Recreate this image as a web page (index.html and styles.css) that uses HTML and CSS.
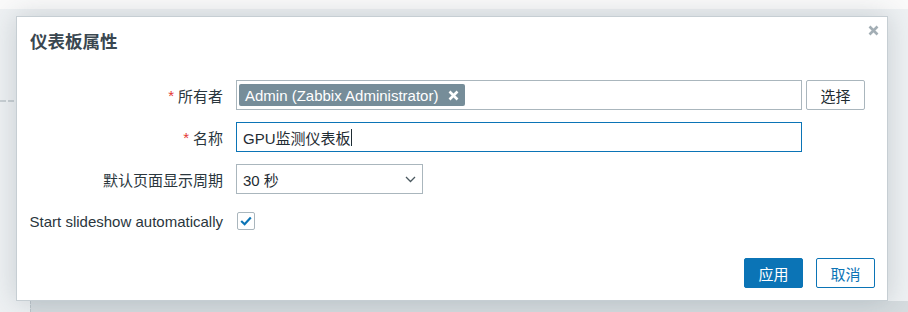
FILE: index.html
```html
<!DOCTYPE html>
<html lang="zh">
<head>
    <meta charset="UTF-8">
    <title>仪表板属性</title>
    <link rel="stylesheet" href="styles.css">
</head>
<body>
    <div class="page-header"></div>
    <div class="dashboard">
        <div class="grid-rule"></div>
        <div class="widget"></div>
    </div>

    <div class="dialog">
        <div class="dialog-head">
            <h4>仪表板属性</h4>
            <button class="btn-close" type="button" title="关闭">
                <svg width="11" height="11" viewBox="0 0 11 11"><path d="M1.5 1.5l8 8M9.5 1.5l-8 8" stroke="#a3aeb5" stroke-width="2.6" stroke-linecap="butt"/></svg>
            </button>
        </div>

        <form class="form-grid">
            <label class="field-label"><span class="req">*</span> 所有者</label>
            <div class="field owner">
                <div class="multiselect">
                    <span class="tag">Admin (Zabbix Administrator)
                        <svg class="tag-x" width="11" height="11" viewBox="0 0 11 11"><path d="M1.5 1.5l8 8M9.5 1.5l-8 8" stroke="#fff" stroke-width="2.6"/></svg>
                    </span>
                </div>
                <button class="btn-alt" type="button">选择</button>
            </div>

            <label class="field-label"><span class="req">*</span> 名称</label>
            <div class="field">
                <div class="text-input focused">GPU监测仪表板<span class="caret"></span></div>
            </div>

            <label class="field-label">默认页面显示周期</label>
            <div class="field">
                <div class="select">
                    <span>30 秒</span>
                    <svg width="11" height="7" viewBox="0 0 11 7"><path d="M1 1l4.5 4.5L10 1" fill="none" stroke="#4b5960" stroke-width="1.3"/></svg>
                </div>
            </div>

            <label class="field-label">Start slideshow automatically</label>
            <div class="field">
                <span class="checkbox">
                    <svg width="12" height="10" viewBox="0 0 12 10"><path d="M1.2 5l3.4 3.2L10.8 1.5" fill="none" stroke="#0b74b6" stroke-width="2.2"/></svg>
                </span>
            </div>
        </form>

        <div class="dialog-foot">
            <button class="btn-main" type="button">应用</button>
            <button class="btn-outline" type="button">取消</button>
        </div>
    </div>
</body>
</html>
```

FILE: styles.css
```css
/* page behind the dialog */
body {
    margin: 0;
    width: 908px;
    height: 312px;
    overflow: hidden;
    background-color: #f3f5f6;
    font-family: 'Liberation Sans', 'Noto Sans CJK SC', sans-serif;
    font-size: 15px;
    color: #1f2c33;
}

.page-header {
    height: 9px;
    background-color: #fafafa;
}

.dashboard {
    display: flex;
    flex-direction: column;
    height: 303px;
    background-color: #eef1f3;
}

.grid-rule {
    margin-top: 91px;
    width: 30px;
    border-top: 2px dashed #c9d0d4;
}

.widget {
    flex: 1;
    margin: 199px 0 0 30px;
    border-left: 1px dashed #bcc5ca;
    background-color: #d6dcdf;
}

/* dialog */
.dialog {
    position: absolute;
    left: 16px;
    top: 16px;
    width: 870px;
    height: 283px;
    border: 1px solid #c6ced3;
    background-color: #ffffff;
    box-shadow: 0 0 26px rgba(40, 60, 75, 0.2);
    display: flex;
    flex-direction: column;
}

.dialog-head {
    display: flex;
    justify-content: space-between;
    align-items: flex-start;
    padding: 15px 7px 0 13px;
}

.dialog-head h4 {
    margin: 0;
    font-size: 17.5px;
    line-height: 20px;
    font-weight: bold;
    color: #3a4750;
}

.btn-close {
    border: none;
    background: none;
    padding: 0;
    margin-top: -8px;
    width: 13px;
    height: 13px;
    cursor: pointer;
}

/* form */
.form-grid {
    display: grid;
    grid-template-columns: 193px 1fr;
    column-gap: 13px;
    row-gap: 12px;
    grid-auto-rows: 30px;
    margin: 0;
    padding: 28px 12px 0 13px;
}

.field-label {
    display: flex;
    align-items: center;
    justify-content: flex-end;
    white-space: nowrap;
    color: #2a363d;
}

.req {
    color: #e33734;
    margin-right: 4px;
}

.field {
    display: flex;
    align-items: center;
    gap: 4px;
}

.multiselect, .text-input, .select {
    box-sizing: border-box;
    height: 30px;
    border: 1px solid #aab6bd;
    background-color: #ffffff;
}

.multiselect {
    width: 566px;
    display: flex;
    align-items: center;
    padding-left: 2px;
}

.tag {
    display: inline-flex;
    align-items: center;
    gap: 10px;
    height: 22px;
    padding: 0 6px 0 6px;
    border-radius: 2px;
    background-color: #768d99;
    color: #ffffff;
    white-space: nowrap;
}

.btn-alt {
    box-sizing: border-box;
    width: 59px;
    height: 30px;
    border: 1px solid #aab6bd;
    border-radius: 2px;
    background-color: #ffffff;
    font-family: inherit;
    font-size: 15px;
    color: #1f2c33;
}

.text-input {
    width: 566px;
    display: flex;
    align-items: center;
    padding-left: 6px;
}

.text-input.focused {
    border-color: #0b74b6;
}

.caret {
    display: inline-block;
    width: 1px;
    height: 17px;
    background-color: #1f2c33;
}

.select {
    width: 187px;
    display: flex;
    align-items: center;
    justify-content: space-between;
    padding: 0 6px 0 6px;
}

.checkbox {
    box-sizing: border-box;
    width: 18px;
    height: 18px;
    margin-left: 1px;
    border: 1px solid #aab6bd;
    border-radius: 2px;
    display: flex;
    align-items: center;
    justify-content: center;
}

/* footer */
.dialog-foot {
    margin-top: auto;
    display: flex;
    justify-content: flex-end;
    gap: 13px;
    padding: 0 12px 12px 0;
}

.btn-main, .btn-outline {
    box-sizing: border-box;
    width: 59px;
    height: 30px;
    border: 1px solid #0b74b6;
    border-radius: 2px;
    font-family: inherit;
    font-size: 15px;
    cursor: pointer;
}

.btn-main {
    background-color: #0b74b6;
    color: #ffffff;
}

.btn-outline {
    background-color: #ffffff;
    color: #0b74b6;
}
```
